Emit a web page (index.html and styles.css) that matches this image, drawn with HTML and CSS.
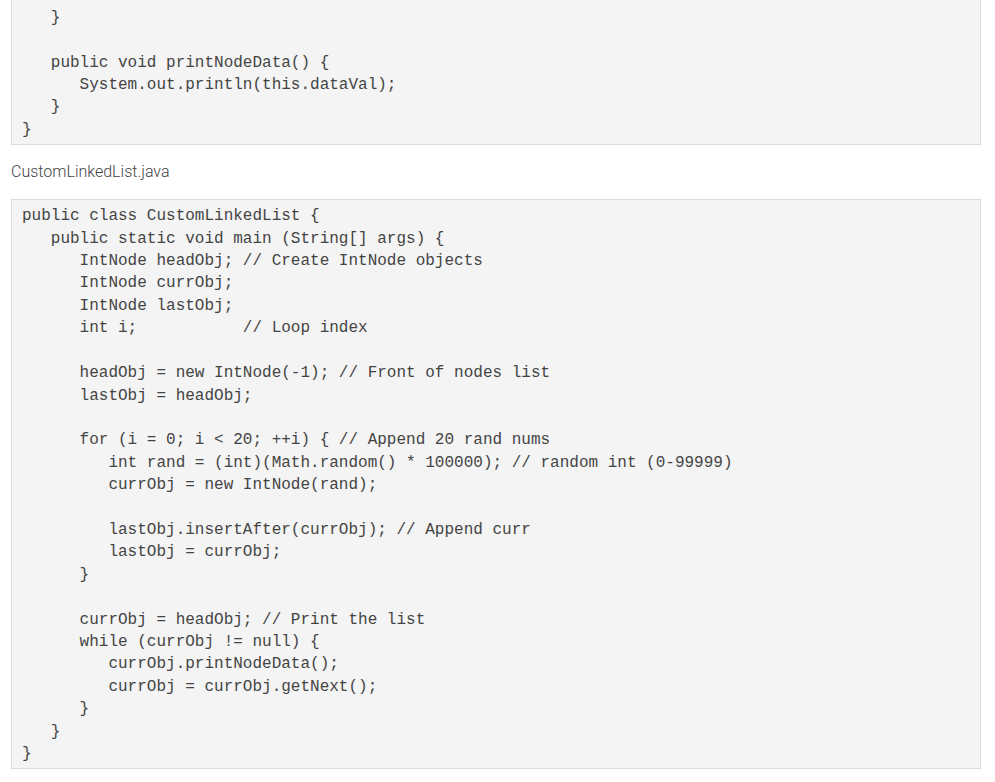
FILE: index.html
```
<!DOCTYPE html>
<html>
<head>
<meta charset="utf-8">
<link rel="stylesheet" href="styles.css">
</head>
<body>
<div class="page">
<pre class="code code-first">      this.nextNodePtr = nodeLoc;

   }

   public void printNodeData() {
      System.out.println(this.dataVal);
   }
}</pre>
<p class="caption">CustomLinkedList.java</p>
<pre class="code">public class CustomLinkedList {
   public static void main (String[] args) {
      IntNode headObj; // Create IntNode objects
      IntNode currObj;
      IntNode lastObj;
      int i;           // Loop index

      headObj = new IntNode(-1); // Front of nodes list
      lastObj = headObj;

      for (i = 0; i &lt; 20; ++i) { // Append 20 rand nums
         int rand = (int)(Math.random() * 100000); // random int (0-99999)
         currObj = new IntNode(rand);

         lastObj.insertAfter(currObj); // Append curr
         lastObj = currObj;
      }

      currObj = headObj; // Print the list
      while (currObj != null) {
         currObj.printNodeData();
         currObj = currObj.getNext();
      }
   }
}</pre>
</div>
</body>
</html>
```
FILE: styles.css
```
html, body {
  margin: 0;
  padding: 0;
  background: #ffffff;
}

.page {
  padding: 0 14px 0 11px;
}

.code {
  margin: 0;
  padding: 5px 10px 3px 10px;
  background: #f4f4f4;
  border: 1px solid #dcdcdc;
  font-family: "Liberation Mono", "Courier New", monospace;
  font-size: 16px;
  line-height: 22.4px;
  color: #444444;
  white-space: pre;
  overflow: hidden;
}

.code-first {
  margin-top: -44px;
}

.caption {
  margin: 15px 0;
  font-family: Roboto, "Liberation Sans", sans-serif;
  font-weight: 300;
  font-size: 16px;
  line-height: 24px;
  color: #444444;
}
```
